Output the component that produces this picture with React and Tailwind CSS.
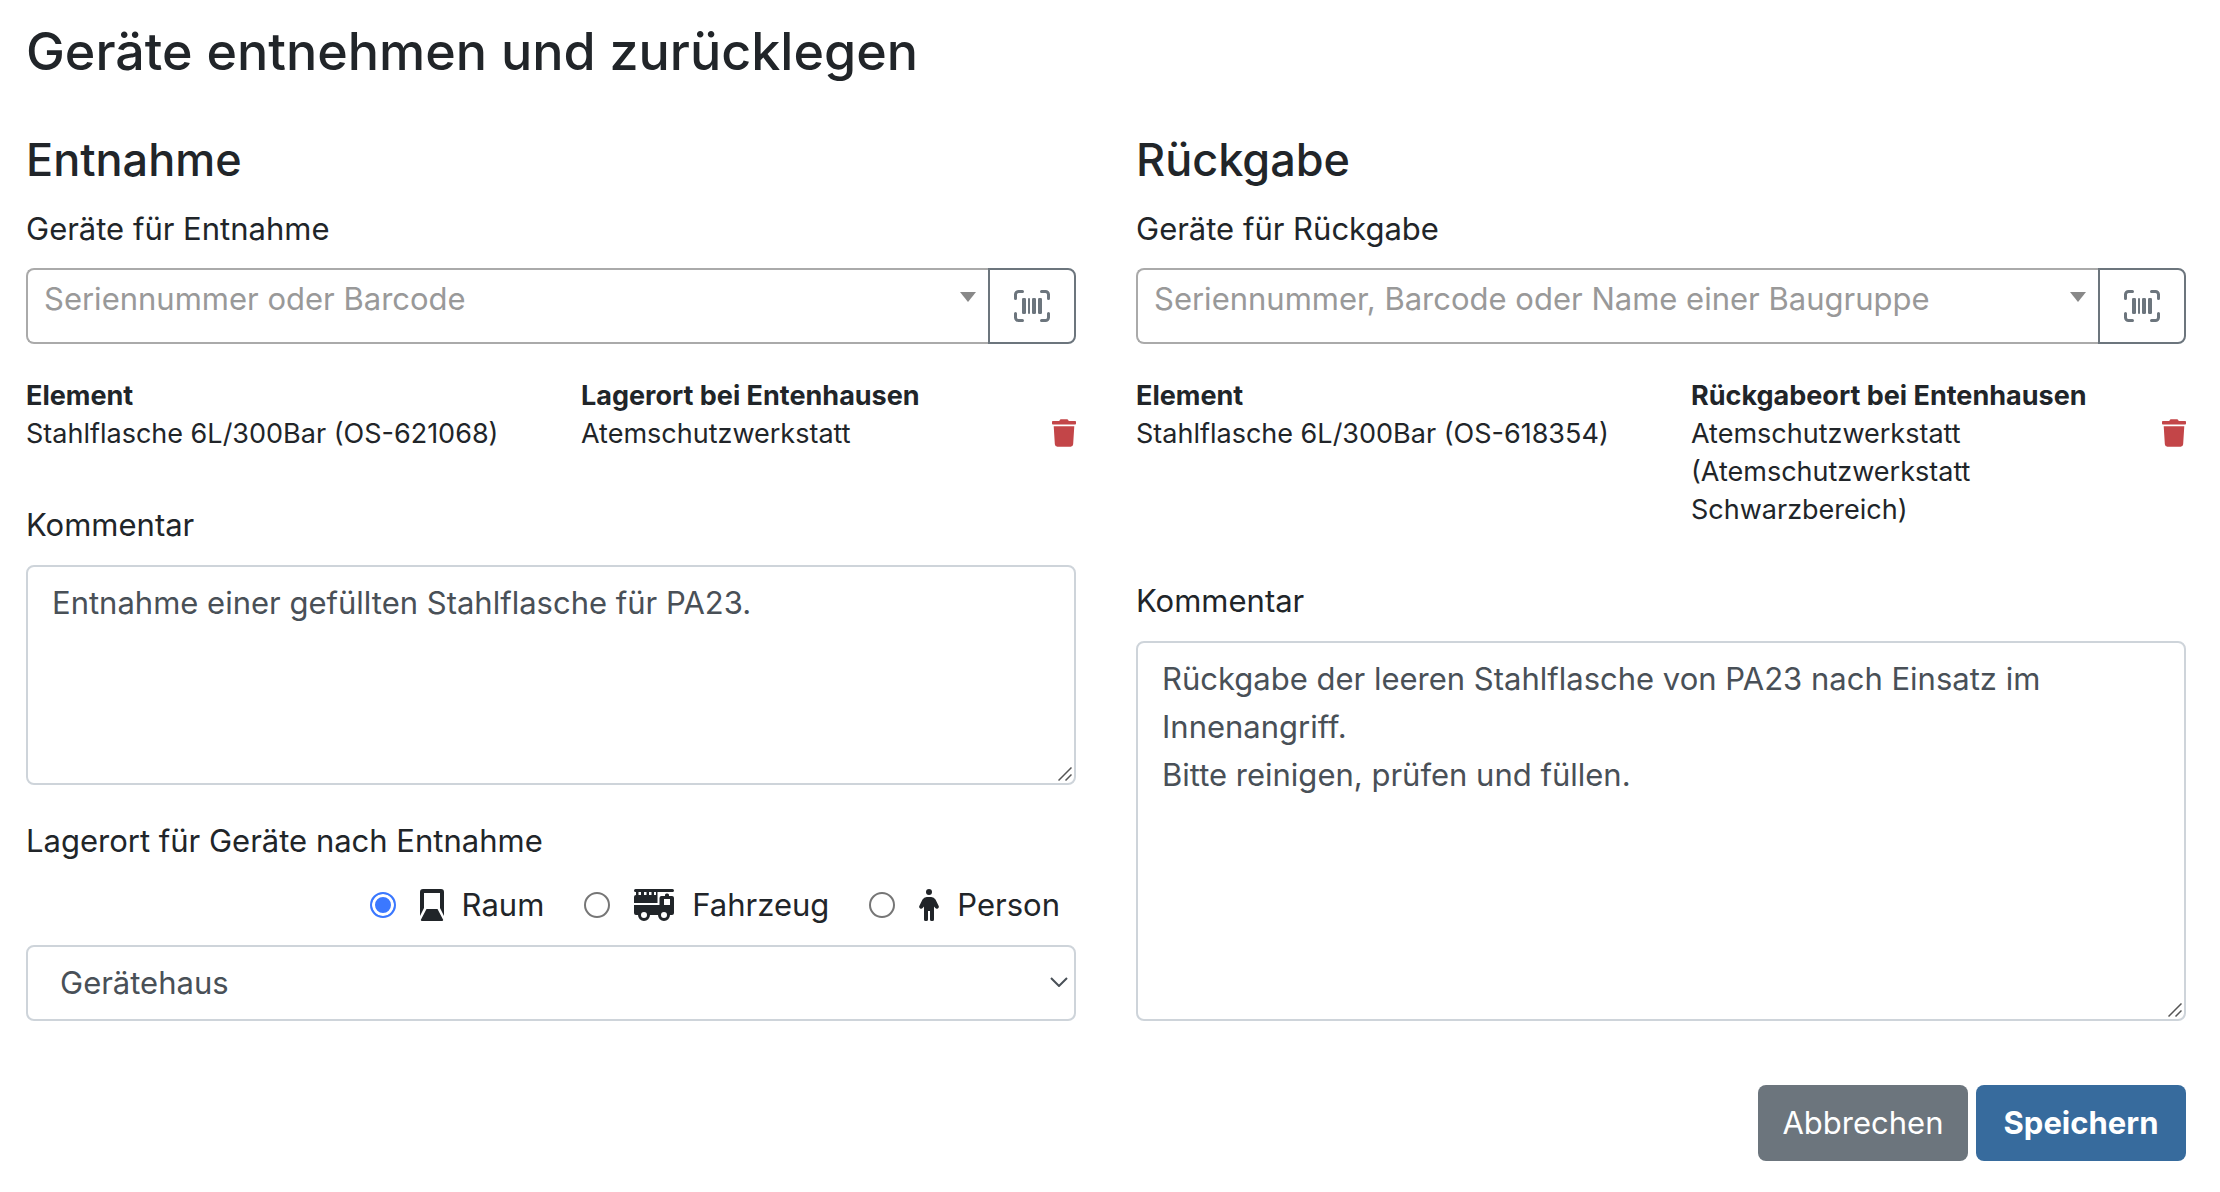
import React, { useState } from "react";
import { FaTrash } from "react-icons/fa";

function BarcodeIcon() {
  return (
    <svg viewBox="0 0 36 32" className="w-9 h-8" aria-hidden="true">
      <path
        d="M1.5 8.5V4.5a3 3 0 0 1 3-3H8.5M27.500 1.5H31.5a3 3 0 0 1 3 3V8.5M34.5 23.5V27.5a3 3 0 0 1-3 3H27.5M8.5 30.5H4.5a3 3 0 0 1-3-3V23.5"
        fill="none"
        stroke="currentColor"
        strokeWidth="3"
        strokeLinecap="round"
      />
      <g fill="currentColor">
        <rect x="8" y="8" width="4" height="16" rx="1.2" />
        <rect x="14" y="8" width="2" height="16" rx="1" />
        <rect x="18" y="8" width="4" height="16" rx="1.2" />
        <rect x="24" y="8" width="4" height="16" rx="1.2" />
      </g>
    </svg>
  );
}

function RaumIcon() {
  return (
    <svg viewBox="0 0 24 32" className="w-6 h-8" fill="currentColor" aria-hidden="true">
      <path d="M3 0H21a3 3 0 0 1 3 3V27L20 19V4H4V19L0 27V3a3 3 0 0 1 3-3Z" />
      <path d="M6.5 20H17.5L23 30.500a1 1 0 0 1-1 1.5H2a1 1 0 0 1-1-1.5Z" />
    </svg>
  );
}

function FahrzeugIcon() {
  return (
    <svg viewBox="0 0 40 32" className="w-10 h-8" fill="currentColor" aria-hidden="true">
      {/* Leiter mit Sprossen */}
      <path d="M1.500 0H38.500a1.500 1.500 0 0 1 0 3H23.500V14H0V8a2 2 0 0 1 2-2V3H1.500a1.500 1.500 0 0 1 0-3ZM4.500 3V6H7V3ZM10 3V6H12.500V3ZM15 3V6H17.500V3ZM20 3V6H22V3Z" fillRule="evenodd" />
      {/* Kabine, Aufbau und Räder */}
      <path
        d="M0 16H25.500V9a2 2 0 0 1 2-2H31V6a1.500 1.500 0 0 1 1.500-1.500H33.500A1.500 1.500 0 0 1 35 6V7H38a2 2 0 0 1 2 2V24a2 2 0 0 1-2 2H36a6 6 0 0 1-12 0H16a6 6 0 0 1-12 0H2a2 2 0 0 1-2-2ZM30 10V16H36V10ZM13 26a3 3 0 0 0-6 0a3 3 0 0 0 6 0ZM33 26a3 3 0 0 0-6 0a3 3 0 0 0 6 0Z"
        fillRule="evenodd"
      />
    </svg>
  );
}

function PersonIcon() {
  return (
    <svg viewBox="0 0 20 32" className="w-5 h-8" fill="currentColor" aria-hidden="true">
      <circle cx="10" cy="3" r="3" />
      <path d="M8 8H12a5 5 0 0 1 4.500 2.500L19.700 17a2 2 0 0 1-3.400 2L15 17.500V30.500a1.500 1.500 0 0 1-1.500 1.500H12.500a1.500 1.500 0 0 1-1.500-1.500V22H9V30.500A1.500 1.500 0 0 1 7.500 32H6.500A1.500 1.500 0 0 1 5 30.500V17.500L3.700 19a2 2 0 0 1-3.400-2L3.500 10.500A5 5 0 0 1 8 8Z" />
    </svg>
  );
}

function GeraeteSuche({ id, label, placeholder }) {
  return (
    <>
      <label htmlFor={id} className="mt-4">{label}</label>
      <div className="mt-[15px] flex h-19">
        <div className="relative flex-1">
          <input
            id={id}
            placeholder={placeholder}
            className="block w-full h-full rounded-l-lg border-2 border-r-0 border-[#aaa] pl-4 pr-12 pb-4 placeholder:text-[#999] outline-none"
          />
          <svg viewBox="0 0 16 10" className="pointer-events-none absolute right-3 top-6 w-4 h-[10px]" fill="#888" aria-hidden="true">
            <path d="M0 0H16L8 10Z" />
          </svg>
        </div>
        <button type="button" aria-label="Barcode scannen" className="flex w-22 items-center justify-center rounded-r-lg border-2 border-[#6c757d] text-[#6c757d]">
          <BarcodeIcon />
        </button>
      </div>
    </>
  );
}

function GeraeteTabelle({ ortTitel, geraet, ort }) {
  return (
    <table className="mt-[33px] w-full table-fixed text-left text-[27px] leading-[38px]">
      <thead>
        <tr>
          <th className="w-[555px] font-bold">Element</th>
          <th className="font-bold">{ortTitel}</th>
          <td className="w-6"></td>
        </tr>
      </thead>
      <tbody>
        <tr className="align-top">
          <td>{geraet}</td>
          <td>{ort}</td>
          <td>
            <button type="button" aria-label="Entfernen" className="block pt-1 text-[#c34548]">
              <FaTrash className="w-6 h-7" />
            </button>
          </td>
        </tr>
      </tbody>
    </table>
  );
}

function Kommentar({ id, text, className }) {
  return (
    <>
      <label htmlFor={id} className="mt-12">Kommentar</label>
      <div className={`relative mt-4 flex ${className}`}>
        <textarea
          id={id}
          defaultValue={text}
          className="w-full rounded-lg border-2 border-[#ced4da] px-6 py-3 text-[#495057] outline-none [&::-webkit-resizer]:bg-transparent"
        />
        <svg viewBox="0 0 14 14" className="pointer-events-none absolute right-1 bottom-1 w-[14px] h-[14px]" fill="none" stroke="#555" strokeWidth="1.5" aria-hidden="true">
          <path d="M0.500 13.500L13.500 0.500M7.500 13.500L13.500 7.500" />
        </svg>
      </div>
    </>
  );
}

const ziele = [
  { key: "raum", label: "Raum", Icon: RaumIcon },
  { key: "fahrzeug", label: "Fahrzeug", Icon: FahrzeugIcon },
  { key: "person", label: "Person", Icon: PersonIcon }
];

export default function App() {
  const [ziel, setZiel] = useState("raum");

  return (
    <form className="bg-white font-['Inter',sans-serif] text-[#212529] text-[31px] leading-12 pl-[26px] pr-[34px] pt-[18px] pb-8">
      <h1 className="text-[52px] leading-[68px] font-medium">Geräte entnehmen und zurücklegen</h1>

      <div className="mt-[45px] grid grid-cols-2 gap-x-[60px]">
        {/* ENTNAHME */}
        <section className="flex flex-col">
          <h2 className="text-[45px] leading-[58px] font-medium">Entnahme</h2>
          <GeraeteSuche id="entnahme" label="Geräte für Entnahme" placeholder="Seriennummer oder Barcode" />
          <GeraeteTabelle
            ortTitel="Lagerort bei Entenhausen"
            geraet="Stahlflasche 6L/300Bar (OS-621068)"
            ort="Atemschutzwerkstatt"
          />
          <Kommentar id="kommentar-entnahme" text="Entnahme einer gefüllten Stahlflasche für PA23." className="h-[220px]" />

          <label htmlFor="lagerort" className="mt-8">Lagerort für Geräte nach Entnahme</label>
          <div className="mt-4 flex justify-end gap-10 pr-4">
            {ziele.map(({ key, label, Icon }) => (
              <label key={key} className="flex items-center">
                <input
                  type="radio"
                  name="ziel"
                  checked={ziel === key}
                  onChange={() => setZiel(key)}
                  className="mr-6 w-[26px] h-[26px] appearance-none rounded-full border-2 border-[#767676] checked:border-[#3b78ff] checked:bg-[#3b78ff] checked:shadow-[inset_0_0_0_3px_white]"
                />
                <Icon />
                <span className="ml-[18px]">{label}</span>
              </label>
            ))}
          </div>
          <div className="relative mt-4">
            <select id="lagerort" className="block w-full h-19 appearance-none rounded-lg border-2 border-[#ced4da] bg-white px-8 text-[#495057] outline-none">
              <option>Gerätehaus</option>
            </select>
            <svg viewBox="0 0 18 10" className="pointer-events-none absolute right-2 top-8 w-[18px] h-[10px]" fill="none" stroke="#495057" strokeWidth="2" aria-hidden="true">
              <path d="M1 1L9 9L17 1" />
            </svg>
          </div>
        </section>

        {/* RÜCKGABE */}
        <section className="flex flex-col">
          <h2 className="text-[45px] leading-[58px] font-medium">Rückgabe</h2>
          <GeraeteSuche id="rueckgabe" label="Geräte für Rückgabe" placeholder="Seriennummer, Barcode oder Name einer Baugruppe" />
          <GeraeteTabelle
            ortTitel="Rückgabeort bei Entenhausen"
            geraet="Stahlflasche 6L/300Bar (OS-618354)"
            ort="Atemschutzwerkstatt (Atemschutzwerkstatt Schwarzbereich)"
          />
          <Kommentar
            id="kommentar-rueckgabe"
            text={"Rückgabe der leeren Stahlflasche von PA23 nach Einsatz im Innenangriff.\nBitte reinigen, prüfen und füllen."}
            className="flex-1"
          />
        </section>
      </div>

      <div className="mt-16 flex justify-end gap-2 text-white">
        <button type="button" className="h-19 min-w-[210px] rounded-lg bg-[#6c757d] px-6">Abbrechen</button>
        <button type="submit" className="h-19 min-w-[210px] rounded-lg bg-[#376b9d] px-6 font-bold">Speichern</button>
      </div>
    </form>
  );
}
